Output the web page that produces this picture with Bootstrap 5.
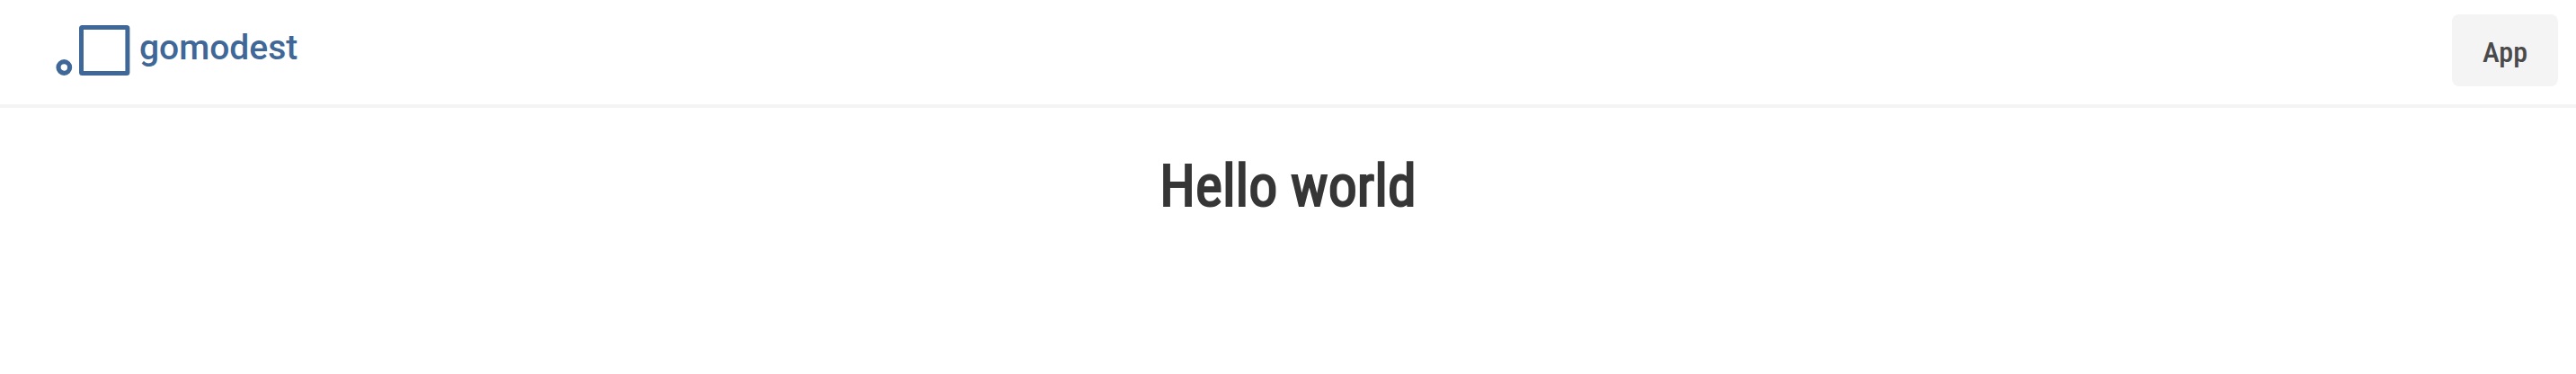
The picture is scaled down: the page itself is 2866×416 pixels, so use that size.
<!DOCTYPE html>
<html lang="en">
<head>
<meta charset="utf-8">
<meta name="viewport" content="width=device-width, initial-scale=1">
<title>gomodest</title>
<link href="https://cdn.jsdelivr.net/npm/bootstrap@5.3.0/dist/css/bootstrap.min.css" rel="stylesheet">
<style>
  body { font-family: "Roboto Condensed", Roboto, sans-serif; color: #363636; }
  .site-header { border-bottom: 4px solid #f4f4f4; padding: 16px 20px 20px 60px; }
  .brand { color: #3f6797; font: 500 39px/48px Roboto, sans-serif; }
  .brand span { padding-bottom: 6px; margin-left: 7px; }
  .brand-mark { width: 88px; height: 60px; }
  .btn-app { --bs-btn-bg: #f4f4f4; --bs-btn-color: #4a4a4a; --bs-btn-hover-bg: #eee; --bs-btn-hover-color: #363636;
    --bs-btn-border-width: 0; --bs-btn-border-radius: 8px; --bs-btn-font-family: inherit;
    --bs-btn-font-size: 32px; --bs-btn-font-weight: 500; --bs-btn-line-height: 48px; padding: 18px 34px 14px; }
  .hero-title { font-size: 64px; line-height: 76px; font-weight: 400; -webkit-text-stroke: 2px currentColor; }
  main { padding-top: 50px; }
</style>
</head>
<body>
<header class="site-header d-flex justify-content-between align-items-center">
  <a class="brand d-flex align-items-center text-decoration-none" href="#">
    <svg class="brand-mark" viewBox="0 0 88 60" fill="none" stroke="currentColor" stroke-width="5" aria-hidden="true">
      <circle cx="11.3" cy="49" r="6.3" stroke-width="5.2"/>
      <rect x="30.5" y="4.5" width="51.4" height="51" rx="1"/>
    </svg>
    <span>gomodest</span>
  </a>
  <button class="btn btn-app" type="button">App</button>
</header>
<main class="container-fluid text-center">
  <h1 class="hero-title mb-0">Hello world</h1>
</main>
<script src="https://cdn.jsdelivr.net/npm/bootstrap@5.3.0/dist/js/bootstrap.bundle.min.js"></script>
</body>
</html>
